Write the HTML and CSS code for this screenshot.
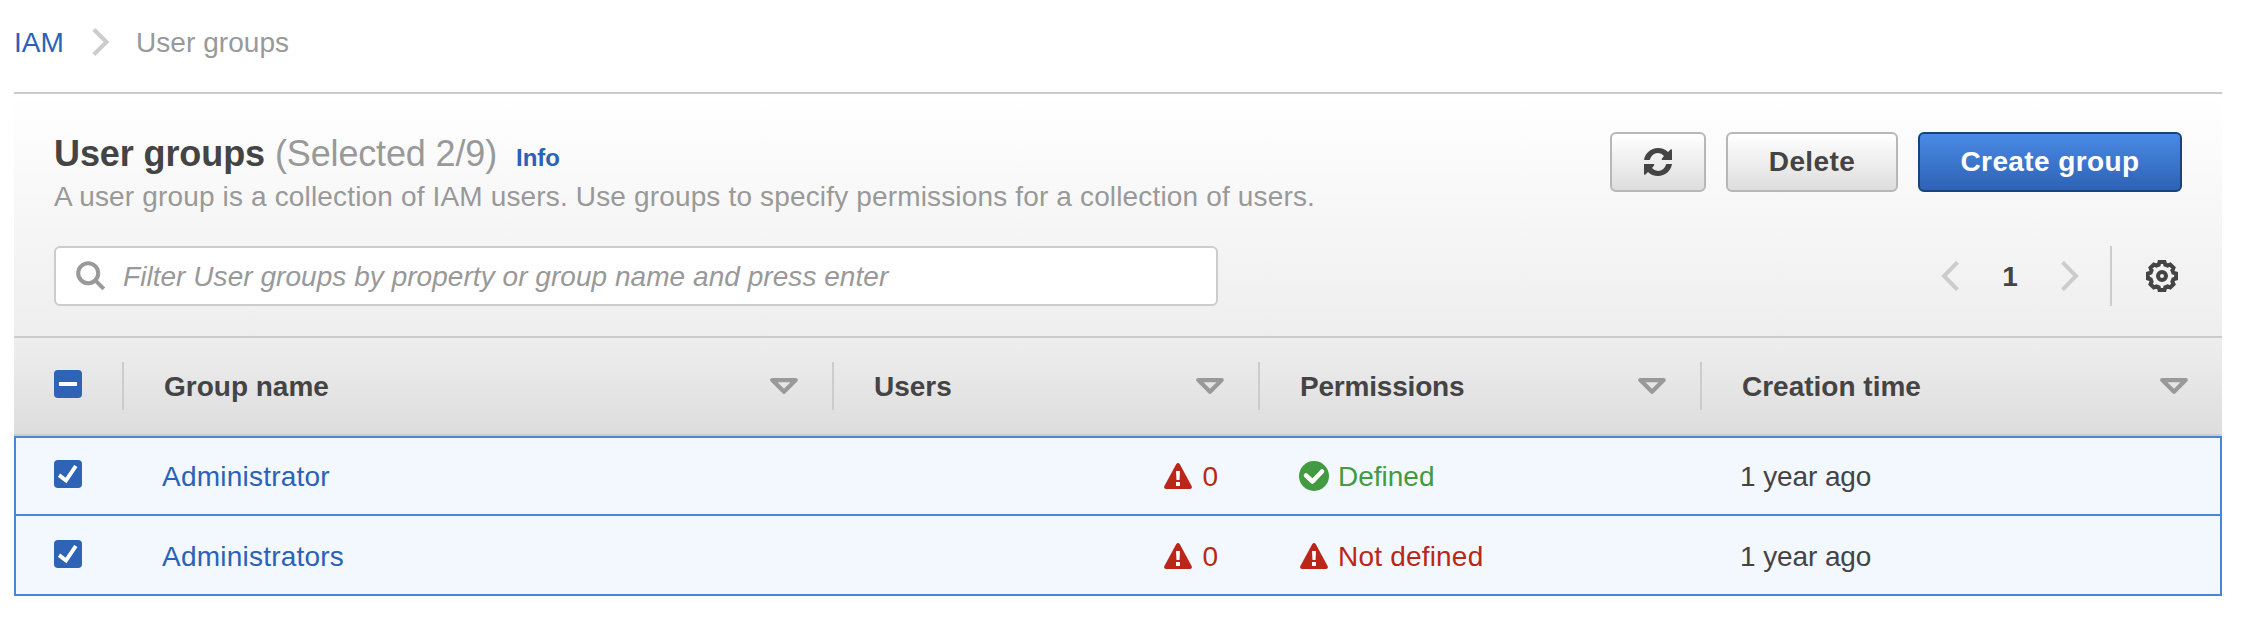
FILE: index.html
```html
<!DOCTYPE html>
<html lang="en">
<head>
<meta charset="utf-8">
<title>User groups</title>
<link rel="stylesheet" href="styles.css">
</head>
<body>
<svg class="defs" width="0" height="0" aria-hidden="true">
  <symbol id="caret" viewBox="0 0 28 16"><path d="M2.300 2.100h23.400L14 13.700z" fill="none" stroke="#999" stroke-width="4.200" stroke-linejoin="round"/></symbol>
  <symbol id="warn" viewBox="0 0 28 26"><path d="M12.300 1Q14 -1 15.700 1L27.600 23Q28.400 26 26 26H2Q-.4 26 .4 23z" fill="#ba2618"/><path d="M12 8h4l-.5 9h-3zM12 19h4v4h-4z" fill="#fff"/></symbol>
  <symbol id="check" viewBox="0 0 28 28"><path d="M5 15.200L12 20.500L21.800 6" fill="none" stroke="#fff" stroke-width="4"/></symbol>
</svg>
<nav class="crumbs">
  <a class="link crumb-root">IAM</a>
  <svg class="crumb-arrow" width="18" height="28" viewBox="0 0 18 28"><path d="M1.800 1.500L14.500 14L1.800 26.500" fill="none" stroke="#ccc" stroke-width="4"/></svg>
  <span class="crumb-current">User groups</span>
</nav>
<main class="panel">
  <header class="panel-head">
    <div class="title-row">
      <div class="heading">
        <h1 class="title"><span class="title-name">User groups</span> <span class="count">(Selected 2/9)</span> <a class="info">Info</a></h1>
        <p class="desc">A user group is a collection of IAM users. Use groups to specify permissions for a collection of users.</p>
      </div>
      <div class="actions">
        <button class="btn refresh" aria-label="Refresh">
          <svg width="28" height="28" viewBox="0 0 28 28" fill="#444"><path d="M0 12C1 5 7 0 14 0C18 0 21.500 1.500 24 4L26.500 1.500Q28 .5 28 2.500V12H18.500Q17 12 18 10.500L20 8Q17.500 5 14 5Q8 5 5.700 12z"/><path d="M28 16C27 23 21 28 14 28C10 28 6.500 26.500 4 24L1.500 26.500Q0 27.500 0 25.500V16H9.500Q11 16 10 17.500L8 20Q10.500 23 14 23Q20 23 22.300 16z"/></svg>
        </button>
        <button class="btn delete">Delete</button>
        <button class="btn primary">Create group</button>
      </div>
    </div>
    <div class="tool-row">
      <div class="search">
        <svg width="30" height="30" viewBox="0 0 30 30" fill="none" stroke="#999" stroke-width="4"><circle cx="12.200" cy="12.200" r="10"/><path d="M19.300 19.300L27.800 27.800"/></svg>
        <span class="placeholder">Filter User groups by property or group name and press enter</span>
      </div>
      <div class="pager">
        <svg width="20" height="30" viewBox="0 0 20 30"><path d="M17.500 1.300L4 15L17.500 28.700" fill="none" stroke="#ccc" stroke-width="4"/></svg>
        <span class="page">1</span>
        <svg width="20" height="30" viewBox="0 0 20 30"><path d="M2.500 1.300L16 15L2.500 28.700" fill="none" stroke="#ccc" stroke-width="4"/></svg>
        <span class="divider"></span>
        <svg class="gear" width="32" height="32" viewBox="0 0 32 32" fill="none" stroke="#444" stroke-width="4"><path d="M13.500 2H18.500L19.300 4.700L21.600 5.600L24.200 4.500L27.500 7.800L26.400 10.400L27.300 12.700L30 13.500V18.500L27.300 19.300L26.400 21.600L27.500 24.200L24.200 27.500L21.600 26.400L19.300 27.300L18.500 30H13.500L12.700 27.300L10.400 26.400L7.800 27.500L4.500 24.200L5.600 21.600L4.700 19.300L2 18.500V13.500L4.700 12.700L5.600 10.400L4.500 7.800L7.800 4.500L10.400 5.600L12.700 4.700z"/><circle cx="16" cy="16" r="4"/></svg>
      </div>
    </div>
  </header>
  <section class="table">
    <div class="row head-row">
      <div class="cell pick"><span class="box"><svg width="28" height="28" viewBox="0 0 28 28"><path d="M5 12h18v4H5z" fill="#fff"/></svg></span></div>
      <div class="cell"><span class="text">Group name</span><svg class="caret" width="28" height="16"><use href="#caret"/></svg></div>
      <div class="cell"><span class="text">Users</span><svg class="caret" width="28" height="16"><use href="#caret"/></svg></div>
      <div class="cell"><span class="text th-perm">Permissions</span><svg class="caret" width="28" height="16"><use href="#caret"/></svg></div>
      <div class="cell"><span class="text">Creation time</span><svg class="caret" width="28" height="16"><use href="#caret"/></svg></div>
    </div>
    <div class="row body-row">
      <div class="cell pick"><span class="box"><svg width="28" height="28"><use href="#check"/></svg></span></div>
      <div class="cell link name"><span class="text">Administrator</span></div>
      <div class="cell users bad"><svg width="28" height="26"><use href="#warn"/></svg><span class="text">0</span></div>
      <div class="cell perm good"><svg width="30" height="30" viewBox="0 0 30 30"><circle cx="15" cy="15" r="15" fill="#429a41"/><path d="M7 14.500L13.500 20.500L23 10.500" fill="none" stroke="#fff" stroke-width="4.500" stroke-linecap="round" stroke-linejoin="round"/></svg><span class="text">Defined</span></div>
      <div class="cell time"><span class="text">1 year ago</span></div>
    </div>
    <div class="row body-row">
      <div class="cell pick"><span class="box"><svg width="28" height="28"><use href="#check"/></svg></span></div>
      <div class="cell link name"><span class="text">Administrators</span></div>
      <div class="cell users bad"><svg width="28" height="26"><use href="#warn"/></svg><span class="text">0</span></div>
      <div class="cell perm bad"><svg class="warn-wide" width="28" height="26"><use href="#warn"/></svg><span class="text undefined-label">Not defined</span></div>
      <div class="cell time"><span class="text">1 year ago</span></div>
    </div>
  </section>
</main>
</body>
</html>
```

FILE: styles.css
```css
* { box-sizing: border-box; }
body {
  margin: 0;
  background: #fff;
  color: #444;
  font: 28px/34px "Liberation Sans", Arial, sans-serif;
}
svg { display: block; flex: none; }
.defs { position: absolute; }
.link { color: #2b62b7; }

.crumbs { display: flex; align-items: center; height: 92px; padding: 0 14px 8px; }
.crumb-root { width: 78px; padding-top: 2px; }
.crumb-arrow { margin-right: 26px; }
.crumb-current { padding-top: 2px; color: #999; letter-spacing: .05px; }

.panel { margin: 0 20px 0 14px; border-top: 2px solid #ccc; }
.panel-head {
  height: 244px;
  padding: 38px 40px 0;
  background: linear-gradient(#fff, #eee);
  border-bottom: 2px solid #ccc;
}
.title-row { display: flex; justify-content: space-between; height: 114px; }
.title { margin: 0; font-size: 36px; line-height: 44px; font-weight: 700; white-space: nowrap; }
.title-name { letter-spacing: -.1px; }
.count { color: #999; font-weight: 400; letter-spacing: -.15px; }
.info { margin-left: 9px; color: #2b62b7; font-size: 24px; }
.desc { margin: 0; color: #999; white-space: nowrap; letter-spacing: .155px; }
.actions { display: flex; gap: 20px; }
.btn {
  height: 60px;
  padding: 0;
  border: 2px solid #b7b7b7;
  border-radius: 6px;
  background: linear-gradient(#fff, #ddd);
  color: #444;
  font: 700 28px/34px "Liberation Sans", Arial, sans-serif;
  letter-spacing: .4px;
}
.refresh { width: 96px; display: grid; place-items: center; }
.delete { width: 172px; }
.primary { width: 264px; border-color: #184479; background: linear-gradient(#4a8ae5, #2e62b5); color: #fff; }

.tool-row { display: flex; justify-content: space-between; height: 60px; }
.search {
  display: flex;
  align-items: center;
  width: 1164px;
  padding-left: 20px;
  background: #fff;
  border: 2px solid #ccc;
  border-radius: 6px;
}
.placeholder { margin-left: 17px; padding-top: 2px; color: #999; font-style: italic; white-space: nowrap; letter-spacing: .045px; }
.pager { display: flex; align-items: center; font-weight: 700; }
.page { width: 100px; padding-top: 2px; text-align: center; }
.divider { width: 2px; height: 60px; margin: 0 34px 0 30px; background: #ccc; }
.gear { margin-right: 4px; }

.row { display: grid; grid-template-columns: 110px 710px 426px 442px 520px; }
.cell { display: flex; align-items: center; padding: 0 40px; white-space: nowrap; }
.text { padding-top: 2px; }
.head-row {
  height: 98px;
  padding: 24px 0;
  background: linear-gradient(#eee, #ddd);
  border-bottom: 2px solid #ccc;
  font-weight: 700;
}
.head-row .cell { height: 48px; border-right: 2px solid #ccc; padding-right: 34px; }
.head-row .cell:last-child { border-right: 0; }
.th-perm { letter-spacing: -.2px; }
.caret { margin-left: auto; }
.body-row { height: 80px; padding-top: 2px; background: #f2f8fd; border: 2px solid #4a86d8; border-top-width: 0; }
.head-row + .body-row { padding-top: 0; border-top-width: 2px; }
.body-row .cell { margin-left: -2px; }
.body-row .name,
.body-row .time { padding-left: 38px; }
.name { letter-spacing: .22px; }
.pick .box { width: 28px; height: 28px; border-radius: 4px; background: #2e63b6; margin-bottom: 4px; }
.body-row .users { justify-content: flex-end; gap: 10px; padding-right: 44px; margin-left: 0; }
.bad { color: #ba2618; }
.good { color: #429a41; }
.body-row .perm { margin-left: -3px; }
.perm svg { margin-right: 9px; }
.perm .warn-wide { margin: 0 10px 0 1px; }
.undefined-label { letter-spacing: .2px; }
.time { letter-spacing: -.1px; }
```
